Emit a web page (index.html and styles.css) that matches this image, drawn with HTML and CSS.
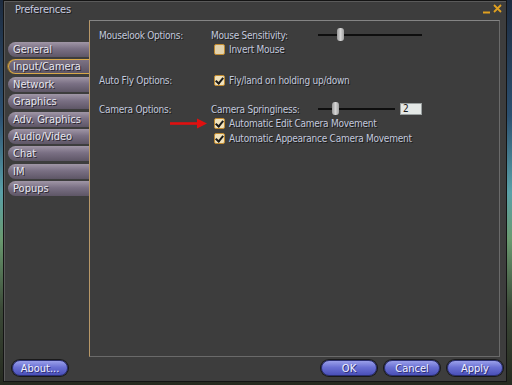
FILE: index.html
```html
<!DOCTYPE html>
<html lang="en">
<head>
  <meta charset="UTF-8">
  <title>Preferences</title>
  <link rel="stylesheet" href="styles.css">
</head>
<body>

<div class="window">
  <div class="titlebar">
    <span class="title">Preferences</span>
    <span class="controls">
      <svg width="20" height="10" viewBox="0 0 20 10">
        <path d="M1 8.5h7" stroke="#e0a020" stroke-width="2"/>
        <path d="M12 1l7 7M19 1l-7 7" stroke="#e0a020" stroke-width="1.8"/>
      </svg>
    </span>
  </div>

  <div class="main">
    <ul class="tabs">
      <li class="tab">General</li>
      <li class="tab active">Input/Camera</li>
      <li class="tab">Network</li>
      <li class="tab">Graphics</li>
      <li class="tab">Adv. Graphics</li>
      <li class="tab">Audio/Video</li>
      <li class="tab">Chat</li>
      <li class="tab">IM</li>
      <li class="tab">Popups</li>
    </ul>

    <div class="panel">
      <div class="row first">
        <div class="group">Mouselook Options:</div>
        <div class="field">Mouse Sensitivity:</div>
        <div class="slider wide"><span class="thumb" style="left: 19px"></span></div>
      </div>
      <div class="row">
        <div class="group"></div>
        <label class="check"><span class="box"></span>Invert Mouse</label>
      </div>

      <div class="row gap-fly">
        <div class="group">Auto Fly Options:</div>
        <label class="check"><span class="box on"></span>Fly/land on holding up/down</label>
      </div>

      <div class="row gap-cam">
        <div class="group">Camera Options:</div>
        <div class="field">Camera Springiness:</div>
        <div class="slider short"><span class="thumb" style="left: 14px"></span></div>
        <div class="num">2</div>
      </div>
      <div class="row tall">
        <div class="group arrow">
          <svg width="40" height="11" viewBox="0 0 40 11">
            <path d="M1 5.5h29" stroke="#e01010" stroke-width="2.6"/>
            <path d="M28 0.5l10 5-10 5z" fill="#e01010"/>
          </svg>
        </div>
        <label class="check"><span class="box on"></span>Automatic Edit Camera Movement</label>
      </div>
      <div class="row tall">
        <div class="group"></div>
        <label class="check"><span class="box on"></span>Automatic Appearance Camera Movement</label>
      </div>
    </div>
  </div>

  <div class="footer">
    <button class="btn about">About...</button>
    <div class="actions">
      <button class="btn">OK</button>
      <button class="btn">Cancel</button>
      <button class="btn">Apply</button>
    </div>
  </div>
</div>

</body>
</html>
```

FILE: styles.css
```css
body {
  margin: 0;
  padding: 0;
  width: 512px;
  height: 385px;
  overflow: hidden;
  background: linear-gradient(to bottom, #1e2c40 0%, #2c5070 30%, #5aa0a8 50%, #6a9a70 62%, #3c4a38 80%, #262a20 100%);
  font-family: "DejaVu Sans Condensed", "DejaVu Sans", sans-serif;
  font-stretch: condensed;
  font-size: 10px;
}

.window {
  margin: 0 5px 0 3px;
  width: 502px;
  height: 380px;
  background: #3d3d3d;
  border: 1px solid #141414;
  box-shadow: inset 1px 1px 0 #5a5a5a;
  display: flex;
  flex-direction: column;
  color: #c2c8dc;
  text-shadow: 1px 1px 0 #1a1a1a;
}

.titlebar {
  height: 19px;
  display: flex;
  justify-content: space-between;
  align-items: center;
  padding: 0 4px 0 11px;
}

.title {
  font-size: 11px;
  color: #c8cce0;
  margin-top: -2px;
  letter-spacing: -0.2px;
}

.controls svg {
  display: block;
  margin-top: -3px;
}

.main {
  display: flex;
  height: 337px;
}

.tabs {
  list-style: none;
  margin: 0;
  padding: 22px 0 0 4px;
  width: 81px;
  display: flex;
  flex-direction: column;
  gap: 2.4px;
}

.tab {
  height: 15px;
  line-height: 15px;
  box-sizing: border-box;
  padding-left: 5px;
  border-radius: 8px 0 0 8px;
  background: linear-gradient(to bottom, #a096a6 0%, #7a7084 45%, #5e5666 100%);
  color: #e6e6ee;
  font-size: 11px;
  text-shadow: 1px 1px 0 #2a2630;
}

.tab.active {
  background: linear-gradient(to bottom, #7c7284 0%, #5c5464 100%);
  border: 1px solid #d8a848;
  border-right: none;
  line-height: 13px;
  padding-left: 4px;
  box-shadow: -1px 0 0 #8a6a2a;
}

.panel {
  width: 411px;
  border: 1px solid #848484;
  border-left: 1px solid #b89868;
  border-right-color: #6a6a6a;
  border-bottom-color: #6a6a6a;
  box-sizing: border-box;
  padding: 7px 0 0 9px;
  letter-spacing: -0.25px;
}

.row {
  display: flex;
  align-items: center;
  height: 14px;
}

.row.tall {
  height: 15px;
}

.gap-fly {
  margin-top: 17px;
}

.gap-cam {
  margin-top: 15px;
}

.group {
  width: 112px;
  flex-shrink: 0;
}

.arrow {
  display: flex;
  justify-content: flex-end;
  padding-right: 2px;
  box-sizing: border-box;
}

.arrow svg {
  display: block;
}

.field {
  width: 107px;
  flex-shrink: 0;
}

.check {
  display: flex;
  align-items: center;
  margin-left: 3px;
}

.box {
  width: 9px;
  height: 9px;
  margin-right: 4px;
  background: #e2d2ac;
  border: 1px solid #c08a30;
  border-radius: 2px;
  position: relative;
}

.box.on {
  background: #f0e2bc;
}

.box.on::after {
  content: "";
  position: absolute;
  left: 2px;
  top: 0px;
  width: 3px;
  height: 6px;
  border: solid #1a1a1a;
  border-width: 0 2px 2px 0;
  transform: rotate(40deg);
}

.slider {
  height: 2px;
  background: #0e0e0e;
  position: relative;
}

.slider.wide {
  width: 104px;
}

.slider.short {
  width: 77px;
}

.thumb {
  position: absolute;
  top: -6px;
  width: 7px;
  height: 13px;
  border-radius: 3px;
  background: linear-gradient(to right, #9a9a9a, #d4d4d4, #a0a0a0);
}

.num {
  margin-left: 5px;
  width: 22px;
  height: 12px;
  box-sizing: border-box;
  background: #e4e8e6;
  border: 1px solid #9aa0a0;
  color: #1a1a1a;
  text-shadow: none;
  padding-left: 2px;
  line-height: 10px;
}

.footer {
  flex: 1;
  display: flex;
  justify-content: space-between;
  align-items: center;
  padding: 0 3px 2px 8px;
}

.actions {
  display: flex;
  gap: 7px;
}

.btn {
  width: 56px;
  height: 16px;
  border-radius: 8px;
  border: 1px solid #2a2e70;
  background: linear-gradient(to bottom, #9aa0ea 0%, #6a70d4 45%, #4a50b8 100%);
  color: #f0f0ff;
  font-family: inherit;
  font-stretch: condensed;
  font-size: 11px;
  text-shadow: 1px 1px 0 #2a2e70;
  padding: 0;
  box-shadow: 0 0 0 1px #1a1a1a;
}
```
